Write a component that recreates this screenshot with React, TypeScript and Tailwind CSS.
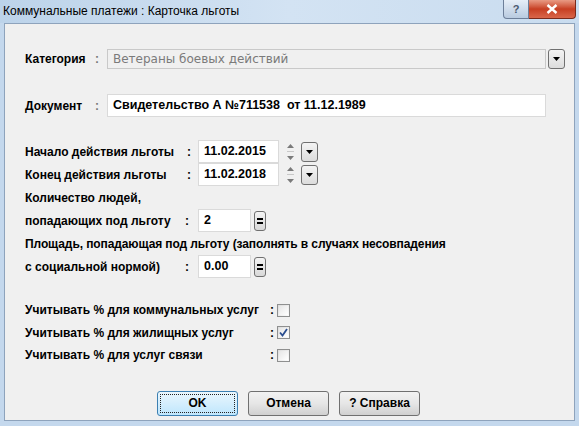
import React from "react"

const lbl = "font-bold text-[12px] text-black leading-none whitespace-nowrap"
const font = { fontFamily: '"Liberation Sans", Arial, sans-serif' }

function DropButton() {
	return (
		<div className="w-[17px] h-[20px] rounded-[3px] border border-[#707070] bg-gradient-to-b from-[#f4f4f4] to-[#dcdcdc] flex items-center justify-center">
			<svg width="7" height="4" viewBox="0 0 7 4">
				<path d="M0 0h7L3.5 4z" fill="#000" />
			</svg>
		</div>
	)
}

function Spinner() {
	return (
		<div className="w-[8px] h-[22px] flex flex-col items-center justify-between py-[3px]">
			<svg width="7" height="4" viewBox="0 0 7 4">
				<path d="M3.5 0L7 4H0z" fill="#7a7a7a" />
			</svg>
			<div className="w-[7px] h-px bg-[#c8c8c8]" />
			<svg width="7" height="4" viewBox="0 0 7 4">
				<path d="M0 0h7L3.5 4z" fill="#7a7a7a" />
			</svg>
		</div>
	)
}

function EqButton() {
	return (
		<div className="w-[12px] h-[20px] rounded-[3px] border border-[#707070] bg-gradient-to-b from-[#f4f4f4] to-[#d8d8d8] flex items-center justify-center">
			<div className="flex flex-col gap-[2px]">
				<div className="w-[6px] h-[2px] bg-black" />
				<div className="w-[6px] h-[2px] bg-black" />
			</div>
		</div>
	)
}

function CheckBox({ checked }: { checked?: boolean }) {
	return (
		<div className="w-[13px] h-[13px] border border-[#8e8f8f] bg-gradient-to-br from-[#dcdcdc] to-[#fbfbfb] p-px">
			<div className="w-full h-full bg-gradient-to-br from-[#e6e6e6] to-[#ffffff] flex items-center justify-center">
				{checked && (
					<svg width="9" height="9" viewBox="0 0 9 9">
						<path d="M1 4.5L3.5 7.5L8 1" stroke="#2a4d8f" strokeWidth="1.8" fill="none" />
					</svg>
				)}
			</div>
		</div>
	)
}

function Field({ value, w }: { value: string; w: string }) {
	return (
		<div className={`${w} h-[23px] bg-white border border-[#dadada] flex items-center pl-[5px] text-[12.5px] font-bold text-black whitespace-pre`}>
			{value}
		</div>
	)
}

export default function App() {
	return (
		<div className="w-[579px] h-[426px] bg-[#c4d8ed] overflow-hidden flex flex-col" style={font}>
			{/* Title bar */}
			<div className="h-[23px] flex items-start justify-between bg-gradient-to-r from-[#bcd3ea] via-[#d3e3f3] to-[#c9dcef]">
				<div className="pl-[3px] pt-[5px] text-[12px] text-black leading-none" style={{ fontFamily: '"Liberation Sans", sans-serif' }}>
					Коммунальные платежи : Карточка льготы
				</div>
				<div className="flex mr-[3px]">
					<div className="w-[26px] h-[19px] border border-[#6d7f99] border-t-0 rounded-bl-[4px] bg-gradient-to-b from-[#e6eef7] to-[#b9cbe0] flex items-center justify-center text-[11px] text-[#4a5a70] font-bold">
						?
					</div>
					<div className="w-[47px] h-[19px] border border-[#7a2a1c] border-t-0 border-l-0 rounded-br-[4px] bg-gradient-to-b from-[#e89a84] via-[#c73e22] to-[#d9664a] flex items-center justify-center">
						<svg width="12" height="10" viewBox="0 0 12 10">
							<path d="M1.5 1L10.5 9M10.5 1L1.5 9" stroke="#fff" strokeWidth="2.4" />
						</svg>
					</div>
				</div>
			</div>

			{/* Client area */}
			<div className="mx-[4px] h-[398px] border border-[#8ea3bc] bg-[#f0f0f0] flex flex-col pl-[20px]">
				{/* Категория */}
				<div className="mt-[24px] h-[21px] flex items-center">
					<div className={`${lbl} w-[70px]`}>Категория</div>
					<div className="w-[12px] text-[12px] font-bold text-[#777]">:</div>
					<div className="w-[439px] h-[20px] border border-[#c9c9c9] bg-[#f0f0f0] flex items-center pl-[5px] text-[12px] text-[#7a7a7a]" style={{ fontFamily: '"DejaVu Sans", sans-serif' }}>
						Ветераны боевых действий
					</div>
					<div className="ml-[2px]">
						<DropButton />
					</div>
				</div>

				{/* Документ */}
				<div className="mt-[25px] h-[23px] flex items-center">
					<div className={`${lbl} w-[70px]`}>Документ</div>
					<div className="w-[12px] text-[12px] font-bold text-[#777]">:</div>
					<Field w="w-[439px]" value="Свидетельство А №711538  от 11.12.1989" />
				</div>

				{/* Начало */}
				<div className="mt-[23px] h-[23px] flex items-center">
					<div className={`${lbl} w-[162px]`}>Начало действия льготы</div>
					<div className="w-[11px] text-[12px] font-bold">:</div>
					<Field w="w-[81px]" value="11.02.2015" />
					<div className="ml-[7px]">
						<Spinner />
					</div>
					<div className="ml-[7px]">
						<DropButton />
					</div>
				</div>

				{/* Конец */}
				<div className="h-[23px] flex items-center">
					<div className={`${lbl} w-[162px]`}>Конец действия льготы</div>
					<div className="w-[11px] text-[12px] font-bold">:</div>
					<Field w="w-[81px]" value="11.02.2018" />
					<div className="ml-[7px]">
						<Spinner />
					</div>
					<div className="ml-[7px]">
						<DropButton />
					</div>
				</div>

				<div className="h-[23px] flex items-center">
					<div className={lbl}>Количество людей,</div>
				</div>

				{/* попадающих */}
				<div className="h-[23px] flex items-center">
					<div className={`${lbl} w-[160px]`}>попадающих под льготу</div>
					<div className="w-[13px] text-[12px] font-bold">:</div>
					<Field w="w-[53px]" value="2" />
					<div className="ml-[3px]">
						<EqButton />
					</div>
				</div>

				<div className="h-[23px] flex items-center">
					<div className={`${lbl} tracking-[-0.1px]`}>Площадь, попадающая под льготу (заполнять в случаях несовпадения</div>
				</div>

				{/* с социальной */}
				<div className="h-[23px] flex items-center">
					<div className={`${lbl} w-[160px]`}>с социальной нормой)</div>
					<div className="w-[13px] text-[12px] font-bold">:</div>
					<Field w="w-[53px]" value="0.00" />
					<div className="ml-[3px]">
						<EqButton />
					</div>
				</div>

				{/* Checkboxes */}
				<div className="mt-[21px] flex flex-col">
					{[
						["Учитывать % для коммунальных услуг", false],
						["Учитывать % для жилищных услуг", true],
						["Учитывать % для услуг связи", false],
					].map(([text, checked]) => (
						<div key={text as string} className="h-[22.5px] flex items-center">
							<div className={`${lbl} w-[245px]`}>{text as string}</div>
							<div className="w-[7px] text-[12px] font-bold">:</div>
							<CheckBox checked={checked as boolean} />
						</div>
					))}
				</div>

				{/* Buttons */}
				<div className="mt-[24px] flex gap-[10px] pl-[132px]">
					<div className="w-[81px] h-[25px] rounded-[3px] border border-[#3c7fb1] bg-gradient-to-b from-[#eaf6fd] to-[#bee6fd] p-[2px]">
						<div className="w-full h-full border border-dotted border-[#222] flex items-center justify-center text-[12px] font-bold">
							OK
						</div>
					</div>
					<div className="w-[81px] h-[25px] rounded-[3px] border border-[#707070] bg-gradient-to-b from-[#f2f2f2] via-[#e6e6e6] to-[#d0d0d0] flex items-center justify-center text-[12px] font-bold">
						Отмена
					</div>
					<div className="w-[81px] h-[25px] rounded-[3px] border border-[#707070] bg-gradient-to-b from-[#f2f2f2] via-[#e6e6e6] to-[#d0d0d0] flex items-center justify-center text-[12px] font-bold">
						? Справка
					</div>
				</div>
			</div>
		</div>
	)
}
